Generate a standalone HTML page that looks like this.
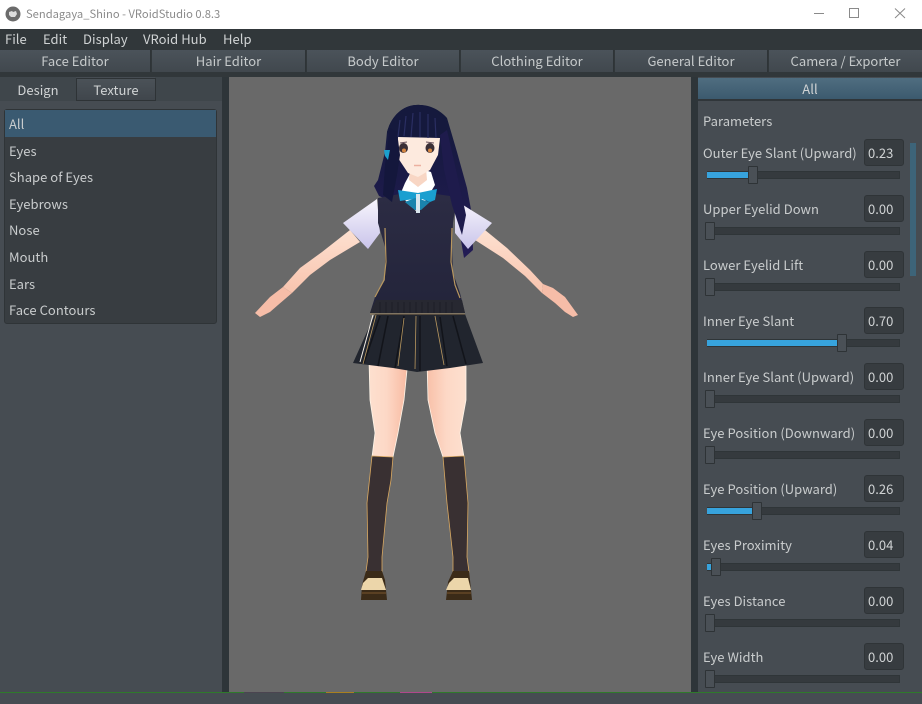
<!DOCTYPE html>
<html><head><meta charset="utf-8"><style>
*{box-sizing:border-box}
html,body{margin:0;padding:0;background:#464c52}
body{width:922px;height:693px;overflow:hidden;position:relative;font-family:"Noto Sans CJK JP","Liberation Sans",sans-serif;font-size:13px;letter-spacing:.03px;color:#d0d3d4}
.a{position:absolute;white-space:nowrap;line-height:18px}
.tab{position:absolute;top:50px;height:22px;background:linear-gradient(#4b535a,#41484e);text-align:center;line-height:22px;color:#c6cacb;border-right:1px solid #2e3437}
.it{position:absolute;left:9px;line-height:18px;color:#c9cccd}
.row{position:absolute;left:703px;width:210px;height:56px}
.row .l{position:absolute;left:0;top:0;line-height:18px;color:#c9cccd;white-space:nowrap}
.row .v{position:absolute;left:161px;top:-5px;width:40px;height:27px;background:#373c40;border:1px solid #2f3437;border-radius:3px;line-height:25px;padding-left:3px;color:#d0d3d4}
.row .t{position:absolute;left:4px;top:27px;width:193px;height:8px;background:#353a3e;border:1px solid #2f3538}
.row .f{position:absolute;left:4px;top:28px;height:6px;background:#37a3dd}
.row .k{position:absolute;top:22px;width:10px;height:18px;background:#4a5056;border:1px solid #2e3336;border-radius:1px}
</style></head><body>
<div class="a" style="left:0;top:0;width:922px;height:29px;background:#fff"></div>
<svg class="a" style="left:5px;top:6px" width="16" height="16"><circle cx="8" cy="8" r="7.500" fill="#6b6b6b"/><path d="M4 6L7 5L8 6L11 5L12 8L10 11H6L4 9Z" fill="#ddd"/></svg>
<div class="a" style="left:26px;top:5px;color:#8b8b8b;font-size:11.200px;letter-spacing:0">Sendagaya_Shino - VRoidStudio 0.8.3</div>
<svg class="a" style="left:800px;top:0" width="122" height="29" fill="none" stroke="#8a8a8a" stroke-width="1"><path d="M14 13.500H24"/><rect x="49.500" y="8.500" width="9" height="9"/><path d="M95 8.500L105 18M105 8.500L95 18"/></svg>

<div class="a" style="left:0;top:29px;width:922px;height:48px;background:#31373a"></div>
<div class="a" style="left:5px;top:30px">File</div>
<div class="a" style="left:43px;top:30px">Edit</div>
<div class="a" style="left:83px;top:30px">Display</div>
<div class="a" style="left:143px;top:30px">VRoid Hub</div>
<div class="a" style="left:223px;top:30px">Help</div>

<div class="tab" style="left:0;width:151px">Face Editor</div>
<div class="tab" style="left:152px;width:154px">Hair Editor</div>
<div class="tab" style="left:307px;width:153px">Body Editor</div>
<div class="tab" style="left:461px;width:153px">Clothing Editor</div>
<div class="tab" style="left:615px;width:153px">General Editor</div>
<div class="tab" style="left:769px;width:153px;border-right:0">Camera / Exporter</div>

<!-- left -->
<div class="a" style="left:0;top:77px;width:222px;height:616px;background:#464c52"></div>
<div class="a" style="left:0;top:77px;width:76px;height:24px;background:#3f464b;text-align:center;line-height:26px">Design</div>
<div class="a" style="left:155px;top:77px;width:67px;height:24px;background:#3f464b"></div>
<div class="a" style="left:76px;top:78px;width:80px;height:23px;background:linear-gradient(#4b5258,#40464c);border:1px solid #2e3336;text-align:center;line-height:22px">Texture</div>
<div class="a" style="left:4px;top:109px;width:213px;height:215px;background:#383d41;border:1px solid #2f3437;border-radius:3px"></div>
<div class="a" style="left:5px;top:110px;width:211px;height:27px;background:#3a5a71"></div>
<div class="it" style="top:115px">All</div>
<div class="it" style="top:142px">Eyes</div>
<div class="it" style="top:168px">Shape of Eyes</div>
<div class="it" style="top:195px">Eyebrows</div>
<div class="it" style="top:221px">Nose</div>
<div class="it" style="top:248px">Mouth</div>
<div class="it" style="top:275px">Ears</div>
<div class="it" style="top:301px">Face Contours</div>

<div class="a" style="left:222px;top:77px;width:7px;height:616px;background:#2e3539"></div>
<div class="a" style="left:229px;top:77px;width:462px;height:616px;background:#696969"></div>
<div class="a" style="left:691px;top:77px;width:7px;height:616px;background:#2e3539"></div>

<!-- figure -->
<svg class="a" style="left:229px;top:77px" width="462" height="616" viewBox="229 77 462 616">
<defs>
<linearGradient id="sk" x1="0" x2="1"><stop offset="0" stop-color="#fde0cf"/><stop offset=".45" stop-color="#fdd8c6"/><stop offset="1" stop-color="#f8b9a0"/></linearGradient>
<linearGradient id="sk2" x1="0" x2="1"><stop offset="0" stop-color="#f8c0a8"/><stop offset=".5" stop-color="#fdd8c6"/><stop offset="1" stop-color="#fde0cf"/></linearGradient>
<linearGradient id="arm" x1="0" y1="0" x2="0" y2="1"><stop offset="0" stop-color="#fde0d0"/><stop offset="1" stop-color="#f8c4ae"/></linearGradient>
<linearGradient id="slv" x1="0" y1="0" x2="0" y2="1"><stop offset="0" stop-color="#f8f6fd"/><stop offset="1" stop-color="#c9c4ea"/></linearGradient>
<linearGradient id="vest" x1="0" y1="0" x2="0" y2="1"><stop offset="0" stop-color="#2c2c44"/><stop offset="1" stop-color="#23243a"/></linearGradient>
<linearGradient id="hair" x1="0" y1="0" x2="0" y2="1"><stop offset="0" stop-color="#13193a"/><stop offset="1" stop-color="#231c55"/></linearGradient>
</defs>
<!-- hair back -->
<path d="M420 105C405 104 392 114 387 132L385 152L378 180L374 186L379 196L400 205L440 205L455 200L460 235L464 258L473 250L472 215L467 188L457 152L447 118C440 110 430 105 420 105Z" fill="url(#hair)"/>
<!-- arms -->
<path d="M350 230L322 252L300 268L283 287L292 293L310 275L330 260L360 242Z" fill="url(#arm)"/>
<path d="M485 230L507 248L530 270L543 284L542 293L525 276L503 258L475 240Z" fill="url(#arm)"/>
<path d="M255 313L260 317L270 312L278 305L292 293L283 287L270 297Z" fill="#f6bda8"/>
<path d="M578 315L573 317L565 312L555 303L542 293L543 284L553 288L565 297Z" fill="#f6bda8"/>
<!-- sleeves -->
<path d="M377 199L343 223L368 249L380 233Z" fill="url(#slv)"/>
<path d="M455 200L492 223L468 249L455 233Z" fill="url(#slv)"/>
<!-- legs -->
<path d="M369 360L408 360L404 400L398 433L393 457L372 457L375 433L370 400Z" fill="url(#sk)" stroke="#fff6ea" stroke-width=".8"/>
<path d="M427 360L466 360L466 400L460 433L464 457L443 457L435 433L428 400Z" fill="url(#sk2)" stroke="#fff6ea" stroke-width=".8"/>
<!-- socks -->
<path d="M372 456L393 457L391 480L387 503L382 557L382 572L366 572L368 557L367 503Z" fill="#393032" stroke="#d9a860" stroke-width=".8"/>
<path d="M443 457L464 456L468 503L467 557L469 572L453 572L453 557L447 503Z" fill="#393032" stroke="#d9a860" stroke-width=".8"/>
<!-- shoes -->
<path d="M366 571L382 571L385 580L387 600L361 600L362 585Z" fill="#3b2b18"/>
<path d="M368 578L382 578L386 590L361 590L363 583Z" fill="#ecd6aa"/>
<path d="M362 592H386V594H362Z" fill="#5a4023"/>
<path d="M453 571L469 571L470 580L472 600L446 600L448 582Z" fill="#3b2b18"/>
<path d="M454 578L468 578L471 590L446 590L449 583Z" fill="#ecd6aa"/>
<path d="M447 592H471V594H447Z" fill="#5a4023"/>
<!-- skirt -->
<path d="M375 314L465 314L483 363L450 368L417 372L393 368L353 363Z" fill="#21252e"/>
<path d="M380 316L364 363M388 316L378 366M404 316L395 368M420 316L420 371M440 317L447 366M453 316L466 364" stroke="#12141a" stroke-width="1.500" fill="none"/>
<path d="M376 315L363 364M404 318L398 366M416 316L415 369M435 316L444 365" stroke="#b8975f" stroke-width=".8" fill="none"/>
<path d="M373 315L360 362" stroke="#f4f0e8" stroke-width="1"/>
<!-- vest -->
<path d="M378 198L400 194L417 212L436 194L457 197L453 223L452 247L453 273L460 293L465 313L370 313L375 297L385 280L385 247L378 223Z" fill="url(#vest)"/>
<path d="M376 300L462 300L465 313L370 313Z" fill="#272831"/>
<path d="M380 302V313M386 302V313M392 302V313M398 302V313M404 302V313M410 302V313M416 302V313M422 302V313M428 302V313M434 302V313M440 302V313M446 302V313M452 302V313" stroke="#1d1e26" stroke-width="1"/>
<path d="M385 228L386 262L384 280L375 297M452 228L451 262L455 285L460 298" stroke="#b8975f" stroke-width="1.200" fill="none"/>
<path d="M370 314H465" stroke="#a88a58" stroke-width=".8"/>
<!-- neck & collar -->
<path d="M405 183L412 170H425L431 172L435 185L418 213L400 195Z" fill="#fff"/>
<path d="M410 168H426L427 180L418 187L409 180Z" fill="#f8d6c4"/>
<!-- bow -->
<path d="M398 190L418 193L437 189L435 200L430 202L422 199L415 210L405 202L414 199L400 201Z" fill="#1a9fd0"/>
<path d="M405 202L415 198L430 202L421 210L415 210Z" fill="#1a83ad"/>
<rect x="416" y="194" width="4" height="19" fill="#d9e6ee"/>
<!-- face -->
<path d="M397 130H441L438 155L430 170L418 177L408 173L398 158Z" fill="#fdeade"/>
<!-- bangs -->
<path d="M387 132C392 114 405 104 420 105C433 106 444 114 447 130L442 145L440 138L398 137L397 150L394 140Z" fill="#15193d"/>
<path d="M400 120L398 137M406 116L404 136M413 113L411 137M420 112L420 137M428 114L428 138M435 118L436 138" stroke="#2a2e62" stroke-width="1.200"/>
<!-- side hair strands -->
<path d="M390 128L397 132L400 155L397 175L392 202L383 195L385 165Z" fill="#14173c"/>
<path d="M440 135L447 130L455 165L466 215L462 235L452 205L444 170Z" fill="#1e1b4c"/>
<!-- eyes -->
<ellipse cx="403.500" cy="148" rx="4.500" ry="5" fill="#3b2f36"/>
<ellipse cx="430" cy="148" rx="4.500" ry="5" fill="#3b2f36"/>
<circle cx="404" cy="150.500" r="2" fill="#d68743"/>
<circle cx="430" cy="150.500" r="2" fill="#d68743"/>
<path d="M400 143L407 142M426 142L434 143" stroke="#6b5560" stroke-width="1"/>
<path d="M414 165.500H421" stroke="#ecb0a0" stroke-width="1.500"/>
<path d="M384 150L390 150L388 160L385 156Z" fill="#1aa0cf"/>
</svg>

<!-- bottom strip -->
<div class="a" style="left:0;top:692px;width:922px;height:1px;background:#2f7a2b"></div>
<div class="a" style="left:244px;top:692px;width:40px;height:1px;background:#4b4550"></div>
<div class="a" style="left:326px;top:692px;width:28px;height:1px;background:#a8801f"></div>
<div class="a" style="left:400px;top:692px;width:32px;height:1px;background:#b0478c"></div>

<!-- right -->
<div class="a" style="left:698px;top:77px;width:224px;height:615px;background:#464c52"></div>
<div class="a" style="left:698px;top:78px;width:224px;height:21px;background:linear-gradient(#4f6d80,#3c5a6e);text-align:center;line-height:21px">All</div>
<div class="a" style="left:698px;top:99px;width:224px;height:2px;background:#30363a"></div>
<div class="a" style="left:703px;top:112px;color:#c9cccd">Parameters</div>
<div class="a" style="left:910px;top:143px;width:6px;height:133px;background:#3d6479"></div>

<div class="row" style="top:144px"><div class="l">Outer Eye Slant (Upward)</div><div class="v">0.23</div><div class="t"></div><div class="f" style="width:42px"></div><div class="k" style="left:45px"></div></div>
<div class="row" style="top:200px"><div class="l">Upper Eyelid Down</div><div class="v">0.00</div><div class="t"></div><div class="k" style="left:2px"></div></div>
<div class="row" style="top:256px"><div class="l">Lower Eyelid Lift</div><div class="v">0.00</div><div class="t"></div><div class="k" style="left:2px"></div></div>
<div class="row" style="top:312px"><div class="l">Inner Eye Slant</div><div class="v">0.70</div><div class="t"></div><div class="f" style="width:130px"></div><div class="k" style="left:134px"></div></div>
<div class="row" style="top:368px"><div class="l">Inner Eye Slant (Upward)</div><div class="v">0.00</div><div class="t"></div><div class="k" style="left:2px"></div></div>
<div class="row" style="top:424px"><div class="l">Eye Position (Downward)</div><div class="v">0.00</div><div class="t"></div><div class="k" style="left:2px"></div></div>
<div class="row" style="top:480px"><div class="l">Eye Position (Upward)</div><div class="v">0.26</div><div class="t"></div><div class="f" style="width:46px"></div><div class="k" style="left:49px"></div></div>
<div class="row" style="top:536px"><div class="l">Eyes Proximity</div><div class="v">0.04</div><div class="t"></div><div class="f" style="width:6px"></div><div class="k" style="left:8px"></div></div>
<div class="row" style="top:592px"><div class="l">Eyes Distance</div><div class="v">0.00</div><div class="t"></div><div class="k" style="left:2px"></div></div>
<div class="row" style="top:648px"><div class="l">Eye Width</div><div class="v">0.00</div><div class="t"></div><div class="k" style="left:2px"></div></div>
</body></html>
